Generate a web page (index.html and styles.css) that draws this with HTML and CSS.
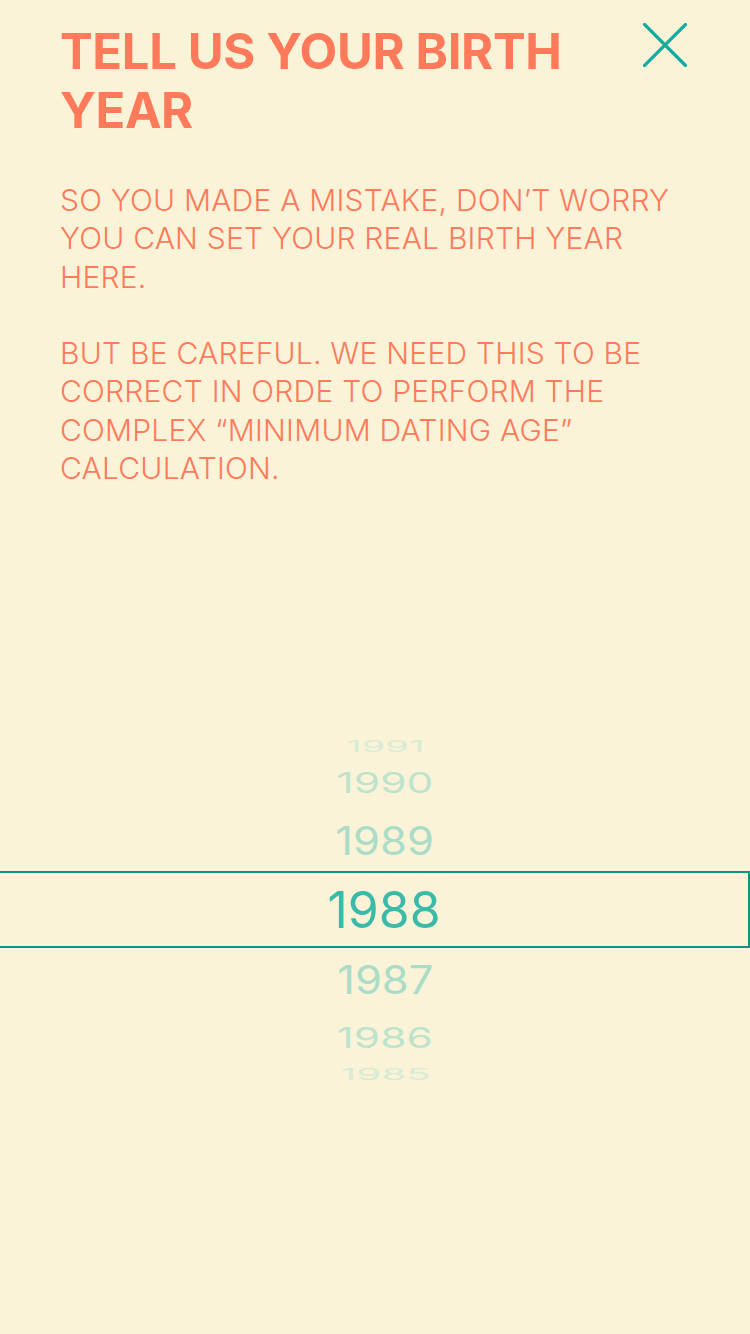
FILE: index.html
```html
<!DOCTYPE html>
<html lang="en">
<head>
<meta charset="utf-8">
<title>Birth year</title>
<link rel="stylesheet" href="styles.css">
</head>
<body>
<main class="screen">
  <header class="top">
    <h1 class="title">TELL US YOUR BIRTH YEAR</h1>
    <button class="close" aria-label="Close">
      <svg viewBox="0 0 44 44" width="44" height="44">
        <path d="M1.5 1.5 L42.5 42.5 M42.5 1.5 L1.5 42.5" stroke="currentColor" stroke-width="3.2" fill="none" stroke-linecap="square"/>
      </svg>
    </button>
  </header>
  <section class="copy">
    <p>SO YOU MADE A MISTAKE, DON’T WORRY YOU CAN SET YOUR REAL BIRTH YEAR HERE.</p>
    <p>BUT BE CAREFUL. WE NEED THIS TO BE CORRECT IN ORDE TO PERFORM THE COMPLEX “MINIMUM DATING AGE” CALCULATION.</p>
  </section>
  <section class="picker">
    <div class="row r-3"><span>1991</span></div>
    <div class="row r-2"><span>1990</span></div>
    <div class="row r-1a"><span>1989</span></div>
    <div class="row selected"><span>1988</span></div>
    <div class="row r-1b"><span>1987</span></div>
    <div class="row r-2b"><span>1986</span></div>
    <div class="row r-3b"><span>1985</span></div>
  </section>
</main>
</body>
</html>
```

FILE: styles.css
```css
* { box-sizing: border-box; }
html, body {
  margin: 0;
  padding: 0;
  background: #fbf3d8;
}
body {
  width: 750px;
  height: 1334px;
  overflow: hidden;
  font-family: Inter, "Noto Sans", sans-serif;
}
.screen {
  display: flex;
  flex-direction: column;
}
.top {
  display: flex;
  align-items: flex-start;
  padding: 22px 63px 0 60px;
}
.title {
  flex: 1;
  margin: 0;
  padding-right: 40px;
  font-size: 49px;
  line-height: 59px;
  font-weight: 700;
  color: #ff7a5b;
  letter-spacing: -0.35px;
}
.close {
  width: 44px;
  height: 44px;
  margin-top: 1px;
  padding: 0;
  border: 0;
  background: none;
  color: #12ab9f;
  display: block;
}
.close svg { display: block; }
.copy {
  margin-top: 41px;
  padding: 0 56px 0 60px;
}
.copy p {
  margin: 0 0 38.3px;
  font-size: 30px;
  line-height: 38.3px;
  font-weight: 300;
  letter-spacing: 0.22px;
  color: #ff7b5c;
}
.copy p:last-child { margin-bottom: 0; }
.picker {
  margin-top: 244px;
  display: flex;
  flex-direction: column;
}
.row {
  display: flex;
  align-items: center;
  justify-content: center;
  padding-left: 20px;
  font-size: 50px;
  line-height: 1;
  color: #3cbaa9;
}
.row span { display: block; }
.r-3 { height: 30px; color: #d6ecd3; }
.r-3 span { transform: scale(0.76, 0.31); }
.r-2 { height: 44px; color: #bde3cc; }
.r-2 span { transform: scale(0.85, 0.56); }
.r-1a { height: 66px; padding-top: 6px; color: #aadcc7; }
.r-1a span { transform: scale(0.87, 0.78); }
.selected {
  height: 77px;
  border: 2px solid #0e9586;
  border-left: 0;
}
.r-1b { height: 64px; color: #aadcc7; }
.r-1b span { transform: scale(0.87, 0.78); }
.r-2b { height: 51px; color: #bde3cc; }
.r-2b span { transform: scale(0.85, 0.58); }
.r-3b { height: 22px; color: #d6ecd3; }
.r-3b span { transform: scale(0.81, 0.33); }
```
